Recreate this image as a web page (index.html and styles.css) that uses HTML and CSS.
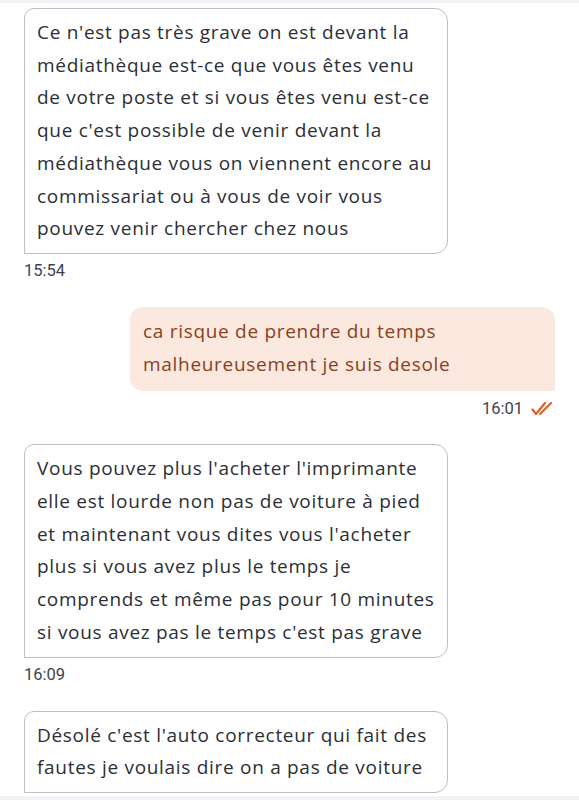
FILE: index.html
```html
<!DOCTYPE html>
<html lang="fr">
<head>
    <meta charset="UTF-8">
    <meta name="viewport" content="width=device-width, initial-scale=1.0">
    <title>Conversation</title>
    <link rel="stylesheet" href="styles.css">
</head>
<body>
<main class="chat">
    <div class="msg in">
        <div class="bubble">
            Ce n'est pas très grave on est devant la<br>
            médiathèque est-ce que vous êtes venu<br>
            de votre poste et si vous êtes venu est-ce<br>
            que c'est possible de venir devant la<br>
            médiathèque vous on viennent encore au<br>
            commissariat ou à vous de voir vous<br>
            pouvez venir chercher chez nous
        </div>
        <div class="time">15:54</div>
    </div>

    <div class="msg out">
        <div class="bubble">
            ca risque de prendre du temps<br>
            malheureusement je suis desole
        </div>
        <div class="time">
            16:01
            <svg class="read" width="22" height="15" viewBox="0 0 22 15">
                <path d="M1.5 8.5 L5 13 L14 2" fill="none" stroke="#e0622a" stroke-width="2.2" stroke-linecap="round" stroke-linejoin="round"/>
                <path d="M9 13 L20 2" fill="none" stroke="#e0622a" stroke-width="2.2" stroke-linecap="round"/>
            </svg>
        </div>
    </div>

    <div class="msg in">
        <div class="bubble">
            Vous pouvez plus l'acheter l'imprimante<br>
            elle est lourde non pas de voiture à pied<br>
            et maintenant vous dites vous l'acheter<br>
            plus si vous avez plus le temps je<br>
            comprends et même pas pour 10 minutes<br>
            si vous avez pas le temps c'est pas grave
        </div>
        <div class="time">16:09</div>
    </div>

    <div class="msg in">
        <div class="bubble">
            Désolé c'est l'auto correcteur qui fait des<br>
            fautes je voulais dire on a pas de voiture
        </div>
    </div>
</main>
</body>
</html>
```

FILE: styles.css
```css
/* General */
body {
    margin: 0;
    padding: 0;
    background: #ffffff;
    font-family: "Open Sans", "Noto Sans", sans-serif;
    height: 800px;
    overflow: hidden;
    border-top: 3px solid #f2f3f5;
    border-bottom: 4px solid #f2f3f5;
    box-sizing: border-box;
}

.chat {
    display: flex;
    flex-direction: column;
    gap: 25px;
    padding: 5px 24px 0;
}

.msg {
    display: flex;
    flex-direction: column;
}

.msg.in {
    align-items: flex-start;
}

.msg.out {
    align-items: flex-end;
}

/* Bubbles */
.bubble {
    box-sizing: border-box;
    width: 424px;
    padding: 7px 12px 8px;
    font-size: 19px;
    letter-spacing: 0.7px;
    line-height: 32.7px;
    white-space: nowrap;
}

.in .bubble {
    border: 1.5px solid #b9c0c8;
    border-radius: 10px 13px 13px 0;
    color: #2b2f36;
    background: #fff;
}

.out .bubble {
    width: 425px;
    background: #fbe9e0;
    color: #8c3f1b;
    border-radius: 13px 13px 0 13px;
    padding: 8px 13px 11px;
}

/* Timestamps */
.time {
    margin-top: 6px;
    height: 22px;
    display: flex;
    align-items: center;
    gap: 8px;
    font-family: "Roboto", sans-serif;
    font-size: 16.5px;
    color: #3c4350;
}

.read {
    margin-right: 2px;
}
```
